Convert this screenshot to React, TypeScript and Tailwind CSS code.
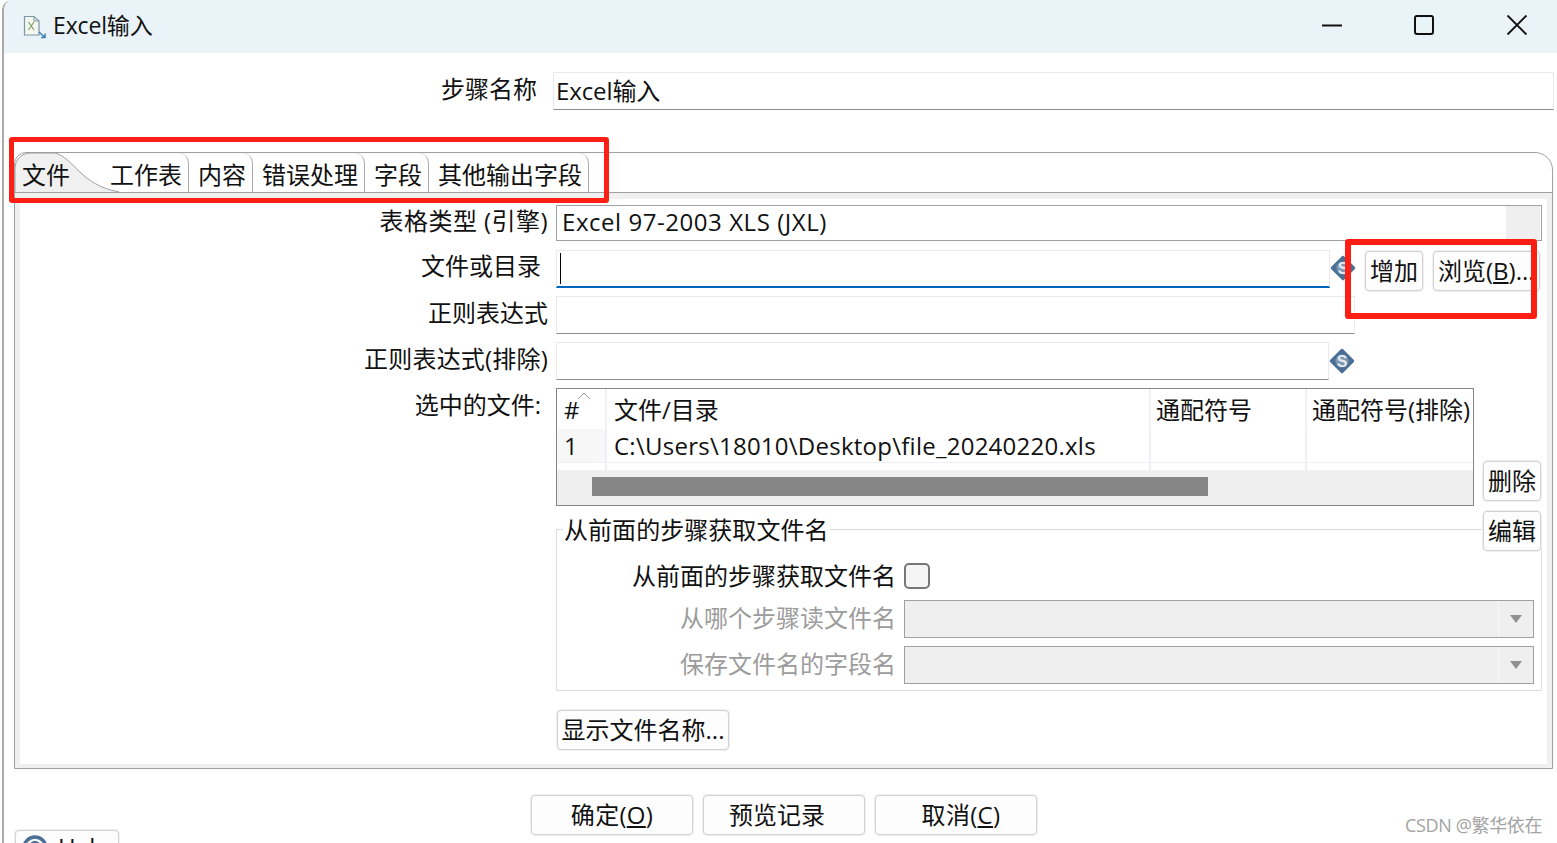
import React from "react";

const font = { fontFamily: '"Open Sans","Noto Sans CJK SC",sans-serif' };

function Btn({ className = "", children }: { className?: string; children: React.ReactNode }) {
  return (
    <div className={"flex shrink-0 items-center justify-center whitespace-nowrap overflow-hidden rounded-[4px] border border-[#d2d2d2] bg-[#fdfdfd] text-[24px] leading-none shadow-[0_0_0_1px_#f0f0f0] " + className}>
      {children}
    </div>
  );
}

function Dollar() {
  return (
    <svg width="26" height="26" viewBox="0 0 26 26" className="shrink-0">
      <path d="M13 2 L24 13 L13 24 L2 13 Z" fill="#4a7096" stroke="#4a7096" strokeWidth="2.5" strokeLinejoin="round" />
      <circle cx="13" cy="13" r="6.5" fill="#7d98b2" />
      <text x="13" y="18.5" textAnchor="middle" fontSize="16" fontWeight="700" fill="#e3eaf0" fontFamily="Liberation Sans">S</text>
    </svg>
  );
}

function Label({ w, children, className = "" }: { w: string; children: React.ReactNode; className?: string }) {
  return <div className={"shrink-0 whitespace-nowrap text-right text-[24px] leading-[30px] " + w + " " + className}>{children}</div>;
}

function Combo({ label }: { label: string }) {
  return (
    <div className="flex h-[38px] items-center">
      <div className="-mt-[3px] w-[347px] shrink-0 whitespace-nowrap pr-[8px] text-right text-[24px] leading-none text-[#9c9c9c]">{label}</div>
      <div className="flex h-[38px] w-[630px] justify-end border border-[#a0a0a0] bg-[#efefef]">
        <div className="flex w-[35px] items-center justify-center border-l border-[#f8f8f8]">
          <svg width="12" height="8" viewBox="0 0 12 8"><path d="M0 0 H12 L6 8 Z" fill="#909090" /></svg>
        </div>
      </div>
    </div>
  );
}

export default function App() {
  return (
    <div style={font} className="relative h-[843px] w-[1557px] overflow-hidden bg-white text-[#111]">
      <div className="ml-[2px] flex h-[843px] flex-col rounded-tl-[10px] border-l-[2px] border-[#a9a9a9]">
        {/* title bar */}
        <div className="flex h-[53px] shrink-0 items-center rounded-tl-[10px] bg-[#e9f3f8] pl-[19px]">
          <svg width="24" height="24" viewBox="0 0 24 24" className="mr-[6px] mt-[1px]">
            <path d="M1.5 1.5 H11 L16 6 V20 H1.5 Z" fill="#f5f9ef" stroke="#7c97a6" strokeWidth="1.2" />
            <path d="M11 1.5 V6 H16" fill="none" stroke="#7c97a6" strokeWidth="1" />
            <path d="M5.5 7 L11 15 M11 7 L5.5 15" stroke="#7a9a6a" strokeWidth="1.1" />
            <path d="M16 17 L22 22.5 M22 18.5 V22.5 H18" fill="none" stroke="#3f7fb5" strokeWidth="1.5" />
          </svg>
          <span className="-mt-[2px] text-[23px] leading-none tracking-[-0.15px]">Excel输入</span>
          <div className="-mt-[3px] ml-auto mr-[29px] flex items-center">
            <svg width="22" height="22" viewBox="0 0 22 22"><path d="M1 11.5 H21" stroke="#111" strokeWidth="2" /></svg>
            <svg width="22" height="22" viewBox="0 0 22 22" className="ml-[70px]"><rect x="2" y="2" width="18" height="18" rx="2" fill="none" stroke="#111" strokeWidth="2" /></svg>
            <svg width="22" height="22" viewBox="0 0 22 22" className="ml-[71px]"><path d="M1.5 1.5 L20.5 20.5 M20.5 1.5 L1.5 20.5" stroke="#111" strokeWidth="1.8" /></svg>
          </div>
        </div>

        {/* step name */}
        <div className="mt-[19px] flex h-[38px] shrink-0 items-center">
          <Label w="w-[533px]" className="-mt-[5px]">步骤名称</Label>
          <div className="ml-[16px] flex h-[38px] w-[1001px] items-center border border-[#eaeaea] border-b-[#8e8e8e] pl-[2px] text-[24px] leading-none tracking-[-0.1px]">Excel输入</div>
        </div>

        {/* tab folder */}
        <div className="ml-[10px] mt-[42px] flex h-[617px] w-[1539px] shrink-0 flex-col rounded-tl-[12px] rounded-tr-[18px] border border-[#a0a0a0]">
          <div className="flex h-[40px] shrink-0 items-end border-b border-[#a0a0a0] text-[24px] leading-none">
            <div className="relative h-[39px] w-[104px] shrink-0">
              <svg width="104" height="39" viewBox="0 0 104 39" className="absolute left-0 top-0">
                <path d="M0 39 V14 C1 5 8 0 16 0 H40 C58 4 66 33 105 39 Z" fill="#f0f0f0" />
                <path d="M0 39 V14 C1 5 8 0 16 0 H40 C58 4 66 33 105 39" fill="none" stroke="#a0a0a0" strokeWidth="1" />
              </svg>
              <span className="absolute left-[7px] top-[10px]">文件</span>
            </div>
            {[
              ["工作表", "w-[79px] -ml-[9px]"],
              ["内容", "w-[64px] pl-[9px]"],
              ["错误处理", "w-[112px] pl-[9px]"],
              ["字段", "w-[64px] pl-[9px]"],
              ["其他输出字段", "w-[160px] pl-[9px]"],
            ].map(([t, c]) => (
              <div key={t} className={"flex h-[39px] shrink-0 items-center whitespace-nowrap rounded-tr-[10px] border-r border-[#a9a9a9] pt-[4px] " + c}>{t}</div>
            ))}
          </div>

          <div className="flex-1 border-[5px] border-t-[6px] border-b-[4px] border-[#f0f0f0] bg-white">
            <div className="mt-[6px] flex h-[36px] items-center">
              <Label w="w-[528px]" className="-mt-[5px] tracking-[0.45px]">表格类型 (引擎)</Label>
              <div className="ml-[8px] flex h-[36px] w-[986px] items-center justify-between border border-[#a0a0a0] pl-[5px] text-[24px] leading-none tracking-[0.55px]">
                <span className="-mt-[2px]">Excel 97-2003 XLS (JXL)</span>
                <div className="mr-[1px] h-full w-[34px] bg-[#efefef]"></div>
              </div>
            </div>

            <div className="mt-[9px] flex h-[42px] items-start">
              <Label w="w-[521px]" className="mt-[1px]">文件或目录</Label>
              <div className="ml-[15px] flex h-[38px] w-[774px] items-center border border-[#eaeaea] border-b-[2px] border-b-[#0067c0] pl-[3px]">
                <div className="h-[31px] w-px bg-black"></div>
              </div>
              <div className="mt-[5px]"><Dollar /></div>
              <Btn className="ml-[9px] mt-[1px] h-[40px] w-[58px]">增加</Btn>
              <Btn className="ml-[10px] mt-[1px] h-[40px] w-[107px] !justify-start pl-[4px]"><span>浏览(<u>B</u>)...</span></Btn>
            </div>

            <div className="mt-[4px] flex h-[38px] items-center">
              <Label w="w-[528px]" className="-mt-[4px]">正则表达式</Label>
              <div className="ml-[8px] h-[38px] w-[799px] border border-[#eaeaea] border-b-[#8e8e8e]"></div>
            </div>

            <div className="mt-[8px] flex h-[38px] items-center">
              <Label w="w-[528px]" className="-mt-[4px] tracking-[0.2px]">正则表达式(排除)</Label>
              <div className="ml-[8px] h-[38px] w-[773px] border border-[#eaeaea] border-b-[#8e8e8e]"></div>
              <Dollar />
            </div>

            <div className="mt-[8px] flex h-[118px] items-start">
              <Label w="w-[521px]" className="mt-[2px]">选中的文件:</Label>
              <div className="ml-[15px] flex h-[118px] w-[918px] shrink-0 flex-col border border-[#868686] text-[24px] leading-none">
                <div className="grid h-[81px] grid-cols-[50px_544px_156px_1fr] grid-rows-[40px_34px_7px]">
                  <div className="relative flex items-center border-r-2 border-[#f1f1f1] pl-[7px] pt-[2px]">
                    #
                    <svg width="14" height="8" viewBox="0 0 14 8" className="absolute left-[20px] top-[3px]"><path d="M1 7 L7 1 L13 7" fill="none" stroke="#9a9a9a" /></svg>
                  </div>
                  <div className="flex items-center border-r-2 border-[#f1f1f1] pl-[7px] pt-[2px]">文件/目录</div>
                  <div className="flex items-center border-r-2 border-[#f1f1f1] pl-[5px] pt-[2px]">通配符号</div>
                  <div className="flex items-center whitespace-nowrap pl-[5px] pt-[2px]">通配符号(排除)</div>
                  <div className="flex items-center border-b border-r-2 border-[#eef0f5] bg-[#f7f7f7] pl-[7px]">1</div>
                  <div className="flex items-center whitespace-nowrap border-b border-r-2 border-[#eef0f5] pl-[7px] tracking-[0.25px]">C:\Users\18010\Desktop\file_20240220.xls</div>
                  <div className="border-b border-r-2 border-[#eef0f5]"></div>
                  <div className="border-b border-[#eef0f5]"></div>
                  <div className="border-r-2 border-[#eef0f5]"></div>
                  <div className="border-r-2 border-[#eef0f5]"></div>
                  <div className="border-r-2 border-[#eef0f5]"></div>
                  <div></div>
                </div>
                <div className="flex-1 bg-[#efefef] pl-[35px] pt-[7px]">
                  <div className="h-[19px] w-[616px] bg-[#868686]"></div>
                </div>
              </div>
              <div className="relative z-10 ml-[9px] mt-[73px] flex flex-col gap-[10px]">
                <Btn className="h-[40px] w-[58px]">删除</Btn>
                <Btn className="h-[40px] w-[58px]">编辑</Btn>
              </div>
            </div>

            {/* group */}
            <div className="ml-[536px] mt-[23px] h-[162px] w-[986px] border border-[#dcdcdc]">
              <div className="-mt-[14px] ml-[6px] w-fit bg-white px-[1px] text-[24px] leading-[28px] tracking-[0.05px]">从前面的步骤获取文件名</div>
              <div className="mt-[17px] flex h-[30px] items-center">
                <div className="w-[347px] whitespace-nowrap pr-[8px] text-right text-[24px] leading-none">从前面的步骤获取文件名</div>
                <div className="h-[26px] w-[26px] rounded-[5px] border-2 border-[#777] bg-[#f5f5f5]"></div>
              </div>
              <div className="mt-[9px] flex flex-col gap-[8px]">
                <Combo label="从哪个步骤读文件名" />
                <Combo label="保存文件名的字段名" />
              </div>
            </div>

            <Btn className="ml-[537px] mt-[19px] h-[40px] w-[172px]">显示文件名称...</Btn>
          </div>
        </div>

        {/* footer */}
        <div className="mt-[26px] flex h-[48px] shrink-0 items-start">
          <div className="ml-[11px] mt-[35px] flex h-[40px] w-[104px] shrink-0 items-start rounded-[4px] border border-[#d2d2d2] bg-[#fdfdfd] pl-[6px] pt-[4px] text-[24px] leading-none shadow-[0_0_0_1px_#f0f0f0]">
            <svg width="26" height="26" viewBox="0 0 26 26"><circle cx="13" cy="13" r="11" fill="#fff" stroke="#4a7096" strokeWidth="3.5" /><circle cx="13" cy="11" r="4" fill="none" stroke="#4a7096" strokeWidth="2.5" /></svg>
            <span className="ml-[10px]">Help</span>
          </div>
          <div className="ml-[412px] flex gap-[10px]">
            <Btn className="h-[40px] w-[162px]"><span className="tracking-[0.3px]">确定(<u>O</u>)</span></Btn>
            <Btn className="h-[40px] w-[162px] pr-[14px]">预览记录</Btn>
            <Btn className="h-[40px] w-[162px] pl-[10px]"><span className="tracking-[0.3px]">取消(<u>C</u>)</span></Btn>
          </div>
        </div>
      </div>

      {/* annotations */}
      <div className="absolute left-[9px] top-[137px] h-[66px] w-[600px] rounded-[3px] border-[5px] border-[#fe1f14]"></div>
      <div className="absolute left-[1345px] top-[239px] h-[80px] w-[192px] rounded-[3px] border-[6px] border-[#fe1f14]"></div>
      <div className="absolute left-[1405px] top-[814px] text-[18px] leading-[22px] tracking-[-0.35px] text-[#a3a3a3]">CSDN @繁华依在</div>
    </div>
  );
}
